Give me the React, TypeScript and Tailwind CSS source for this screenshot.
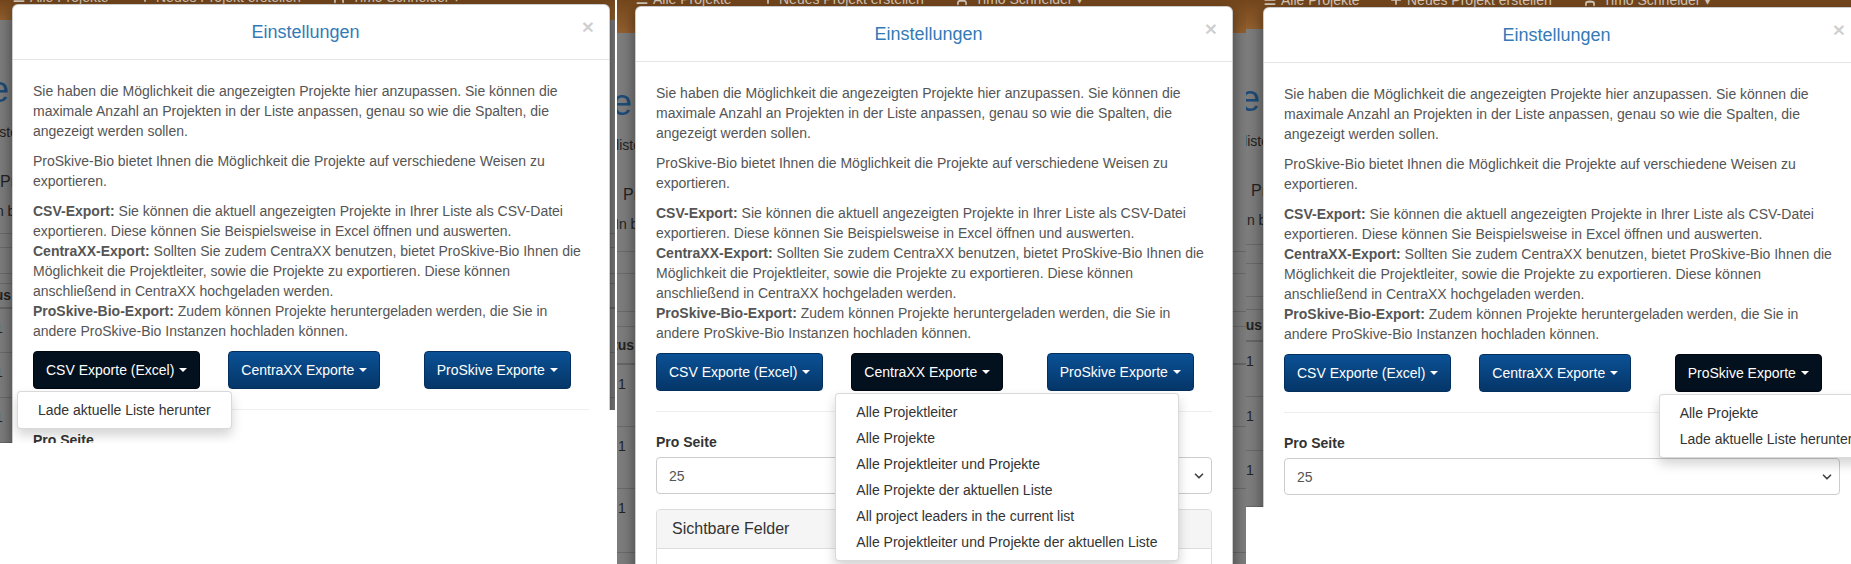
import { ChevronDown, Menu, Plus, User } from "lucide-react";

type Which = "csv" | "centraxx" | "proskive";

type PanelSpec = {
  box: string;
  modal: string;
  pad: string;
  nav: string;
  navText: string;
  open: Which;
  cutout?: boolean;
};

const menus: Record<Which, string[]> = {
  csv: ["Lade aktuelle Liste herunter"],
  centraxx: [
    "Alle Projektleiter",
    "Alle Projekte",
    "Alle Projektleiter und Projekte",
    "Alle Projekte der aktuellen Liste",
    "All project leaders in the current list",
    "Alle Projektleiter und Projekte der aktuellen Liste",
  ],
  proskive: ["Alle Projekte", "Lade aktuelle Liste herunter"],
};

const buttons: { id: Which; label: string }[] = [
  { id: "csv", label: "CSV Exporte (Excel)" },
  { id: "centraxx", label: "CentraXX Exporte" },
  { id: "proskive", label: "ProSkive Exporte" },
];

const panels: PanelSpec[] = [
  {
    box: "w-[615px] h-[443px]",
    modal: "left-[12px] top-[4px]",
    pad: "pl-[12px]",
    nav: "h-[31px]",
    navText: "-mt-[13px]",
    open: "csv",
    cutout: true,
  },
  {
    box: "w-[629px] h-[564px]",
    modal: "left-[18px] top-[6px]",
    pad: "pl-[18px]",
    nav: "h-[33px]",
    navText: "-mt-[11px]",
    open: "centraxx",
  },
  {
    box: "w-[605px] h-[507px]",
    modal: "left-[17px] top-[7px]",
    pad: "pl-[17px]",
    nav: "h-[34px]",
    navText: "-mt-[10px]",
    open: "proskive",
  },
];

function Backdrop({ spec }: { spec: PanelSpec }) {
  return (
    <div className="flex h-full flex-col bg-[#7d7d7d] text-[#232323]">
      <div
        className={`overflow-hidden bg-linear-to-b from-[#74461c] to-[#93602e] ${spec.nav}`}
      >
        <div
          className={`flex items-center text-[14px] leading-[20px] text-[#d8cbbd] ${spec.pad} ${spec.navText}`}
        >
          <span className="flex w-[126px] items-center gap-[4px]">
            <Menu size={14} strokeWidth={3} />
            Alle Projekte
          </span>
          <span className="flex w-[194px] items-center gap-[4px]">
            <Plus size={14} strokeWidth={3} />
            Neues Projekt erstellen
          </span>
          <span className="flex items-center gap-[6px]">
            <User size={14} strokeWidth={3} />
            Timo Schneider ▾
          </span>
        </div>
      </div>

      <div className={`whitespace-nowrap ${spec.pad}`}>
        <div className="mt-[50px] h-[40px] text-[36px] leading-[40px] text-[#1d4b78]">
          <span className="-ml-[3px] inline-block -translate-x-full">
            Projekte
          </span>
        </div>
        <div className="mt-[12px] h-[20px] text-[14px] leading-[20px]">
          <span className="ml-[6px] inline-block -translate-x-full">
            Suchliste
          </span>
        </div>
        <div className="mt-[29px] h-[22px] text-[16px] leading-[22px]">
          <span className="-ml-[12px] inline-block">Projekte verwalten</span>
        </div>
        <div className="mt-[8px] h-[20px] text-[14px] leading-[20px]">
          <span className="-ml-[20px] inline-block">In bearbeitung</span>
        </div>
      </div>

      <div className="h-[18px] border-b border-[#6a6a6a]" />
      <div className="h-[22px] border-b border-[#6a6a6a]" />
      <div className="h-[38px] border-b border-[#6a6a6a]" />
      <div className="h-[15px] border-b border-[#6a6a6a]" />
      <div
        className={`flex h-[38px] items-center border-b-2 border-[#666] text-[14px] font-bold ${spec.pad}`}
      >
        <span className="-ml-[1px] inline-block -translate-x-full">Sichtus</span>
      </div>
      {[62, 62, 64].map((h, i) => (
        <div
          key={i}
          className={`border-b border-[#6a6a6a] pt-[9px] text-[14px] leading-[20px] ${spec.pad} ${
            h === 64 ? "h-[64px]" : "h-[62px]"
          }`}
        >
          <span className="-ml-[17px] inline-block">1</span>
        </div>
      ))}
    </div>
  );
}

function ExportButton({
  label,
  active,
}: {
  label: string;
  active: boolean;
}) {
  return (
    <button
      className={`inline-flex items-center whitespace-nowrap rounded-[4px] border px-[12px] py-[8px] text-[14px] leading-[20px] text-white ${
        active
          ? "border-[#01070e] bg-[#03101d]"
          : "border-[#043060] bg-linear-to-b from-[#0b5196] to-[#053668]"
      }`}
    >
      {label}
      <span className="ml-[5px] inline-block h-0 w-0 border-x-[4px] border-t-[4px] border-x-transparent border-t-white" />
    </button>
  );
}

function Modal({ spec }: { spec: PanelSpec }) {
  return (
    <div
      className={`absolute w-[598px] rounded-[6px] border border-black/20 bg-white shadow-[0_5px_15px_rgba(0,0,0,0.5)] ${spec.modal}`}
    >
      <div className="relative border-b border-[#e5e5e5] px-[15px] py-[14px]">
        <h4 className="pr-[11px] text-center text-[18px] leading-[26px] text-[#337ab7]">
          Einstellungen
        </h4>
        <span className="absolute right-[15px] top-[11px] text-[21px] font-bold leading-none text-black/20">
          ×
        </span>
      </div>

      <div className="whitespace-nowrap px-[20px] pb-[20px] pt-[21px] text-[14px] leading-[20px] text-[#555]">
        <p className="mb-[10px]">
          Sie haben die Möglichkeit die angezeigten Projekte hier anzupassen. Sie können die
          <br />
          maximale Anzahl an Projekten in der Liste anpassen, genau so wie die Spalten, die
          <br />
          angezeigt werden sollen.
        </p>
        <p className="mb-[10px]">
          ProSkive-Bio bietet Ihnen die Möglichkeit die Projekte auf verschiedene Weisen zu
          <br />
          exportieren.
        </p>
        <p className="mb-[10px]">
          <strong>CSV-Export:</strong> Sie können die aktuell angezeigten Projekte in Ihrer Liste als CSV-Datei
          <br />
          exportieren. Diese können Sie Beispielsweise in Excel öffnen und auswerten.
          <br />
          <strong>CentraXX-Export:</strong> Sollten Sie zudem CentraXX benutzen, bietet ProSkive-Bio Ihnen die
          <br />
          Möglichkeit die Projektleiter, sowie die Projekte zu exportieren. Diese können
          <br />
          anschließend in CentraXX hochgeladen werden.
          <br />
          <strong>ProSkive-Bio-Export:</strong> Zudem können Projekte heruntergeladen werden, die Sie in
          <br />
          andere ProSkive-Bio Instanzen hochladen können.
        </p>

        <div className="-mx-[15px] flex">
          {buttons.map((b) => (
            <div key={b.id} className="relative w-1/3 px-[15px]">
              <ExportButton label={b.label} active={spec.open === b.id} />
              {spec.open === b.id && (
                <ul className="absolute -left-[1px] top-full z-10 mt-[2px] rounded-[4px] border border-black/15 bg-white py-[5px] shadow-[0_6px_12px_rgba(0,0,0,0.175)]">
                  {menus[b.id].map((item) => (
                    <li
                      key={item}
                      className="whitespace-nowrap px-[20px] py-[3px] leading-[20px] text-[#333]"
                    >
                      {item}
                    </li>
                  ))}
                </ul>
              )}
            </div>
          ))}
        </div>

        <hr className="my-[20px] border-[#eee]" />

        <label className="mb-[5px] block font-bold text-[#333]">Pro Seite</label>
        <div className="relative flex h-[37px] items-center justify-between rounded-[4px] border border-[#ccc] pl-[12px] pr-[5px] text-[#555]">
          <span>25</span>
          <ChevronDown size={14} strokeWidth={3} className="text-[#444]" />
        </div>

        <div className="mt-[15px] rounded-[4px] border border-[#ddd]">
          <div className="rounded-t-[4px] border-b border-[#ddd] bg-[#f5f5f5] px-[15px] py-[10px] text-[16px] leading-[18px] text-[#333]">
            Sichtbare Felder
          </div>
          <div className="h-[120px]" />
        </div>
      </div>
    </div>
  );
}

function Panel({ spec }: { spec: PanelSpec }) {
  return (
    <div className={`relative shrink-0 overflow-hidden ${spec.box}`}>
      <Backdrop spec={spec} />
      <Modal spec={spec} />
      {spec.cutout && (
        <div className="absolute right-0 top-[410px] h-[40px] w-[6px] bg-white" />
      )}
    </div>
  );
}

export default function App() {
  return (
    <div className="flex h-[564px] w-[1851px] items-start gap-[2px] overflow-hidden bg-white font-['Liberation_Sans',Arial,sans-serif]">
      <Panel spec={panels[0]} />
      <div className="-ml-[2px] flex items-start">
        <div className="w-[2px]" />
        <Panel spec={panels[1]} />
        <Panel spec={panels[2]} />
      </div>
    </div>
  );
}
